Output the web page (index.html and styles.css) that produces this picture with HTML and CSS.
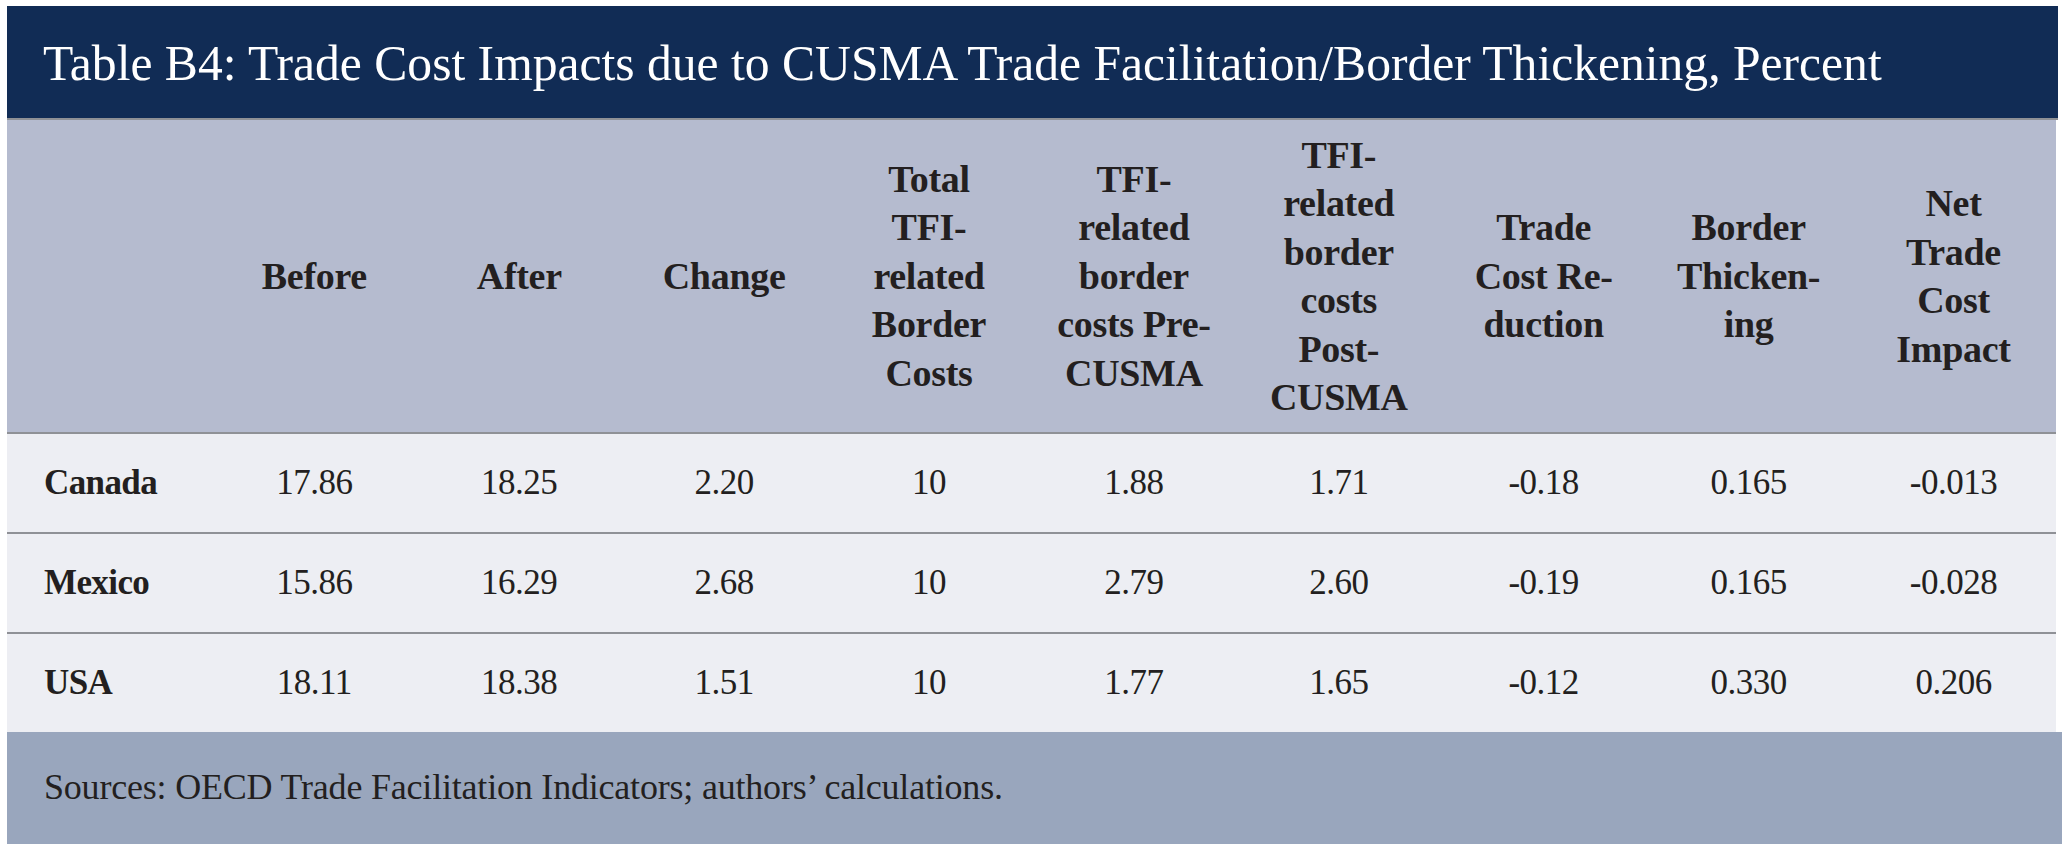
FILE: index.html
```html
<!DOCTYPE html>
<html lang="en">
<head>
<meta charset="utf-8">
<title>Table B4</title>
<link rel="stylesheet" href="styles.css">
</head>
<body>
<div class="page">
  <div class="title">Table B4: Trade Cost Impacts due to CUSMA Trade Facilitation/Border Thickening, Percent</div>
  <table class="data">
    <thead>
      <tr>
        <th class="label"></th>
        <th>Before</th>
        <th>After</th>
        <th>Change</th>
        <th>Total<br>TFI-<br>related<br>Border<br>Costs</th>
        <th>TFI-<br>related<br>border<br>costs Pre-<br>CUSMA</th>
        <th>TFI-<br>related<br>border<br>costs<br>Post-<br>CUSMA</th>
        <th>Trade<br>Cost Re-<br>duction</th>
        <th>Border<br>Thicken-<br>ing</th>
        <th>Net<br>Trade<br>Cost<br>Impact</th>
      </tr>
    </thead>
    <tbody>
      <tr>
        <td class="label">Canada</td>
        <td>17.86</td><td>18.25</td><td>2.20</td><td>10</td><td>1.88</td><td>1.71</td><td>-0.18</td><td>0.165</td><td>-0.013</td>
      </tr>
      <tr>
        <td class="label">Mexico</td>
        <td>15.86</td><td>16.29</td><td>2.68</td><td>10</td><td>2.79</td><td>2.60</td><td>-0.19</td><td>0.165</td><td>-0.028</td>
      </tr>
      <tr>
        <td class="label">USA</td>
        <td>18.11</td><td>18.38</td><td>1.51</td><td>10</td><td>1.77</td><td>1.65</td><td>-0.12</td><td>0.330</td><td>0.206</td>
      </tr>
    </tbody>
  </table>
  <div class="footer">Sources: OECD Trade Facilitation Indicators; authors’ calculations.</div>
</div>
</body>
</html>
```

FILE: styles.css
```css
html, body {
  margin: 0;
  padding: 0;
  background: #ffffff;
  overflow: hidden;
}

.page {
  padding: 6px 0 0 7px;
  font-family: "Liberation Serif", "Times New Roman", serif;
  color: #231f20;
}

.title {
  width: 2051px;
  height: 114px;
  box-sizing: border-box;
  background: #112c55;
  color: #ffffff;
  font-size: 49.6px;
  line-height: 116px;
  padding-left: 36px;
  white-space: nowrap;
  border-bottom: 2px solid #8f9196;
}

.data {
  width: 2049px;
  border-collapse: collapse;
  table-layout: fixed;
}

.data th,
.data td {
  width: 204.9px;
  padding: 0;
  text-align: center;
  vertical-align: middle;
  white-space: nowrap;
}

.data thead tr {
  height: 313px;
  background: #b5bbcf;
  border-bottom: 2px solid #8f9196;
}

.data th {
  font-size: 38px;
  line-height: 48.5px;
  font-weight: bold;
  letter-spacing: -0.3px;
}

.data tbody tr {
  height: 100px;
  background: #edeef3;
  border-bottom: 2px solid #8f9196;
}

.data td {
  font-size: 35px;
  line-height: 40px;
  letter-spacing: -0.5px;
}

.data td.label {
  text-align: left;
  padding-left: 37px;
  font-weight: bold;
  letter-spacing: -0.6px;
}

.footer {
  width: 2055px;
  height: 112px;
  margin-top: -2px;
  box-sizing: border-box;
  background: #99a6bd;
  font-size: 36px;
  line-height: 110px;
  padding-left: 37px;
  letter-spacing: -0.2px;
  white-space: nowrap;
}
```
